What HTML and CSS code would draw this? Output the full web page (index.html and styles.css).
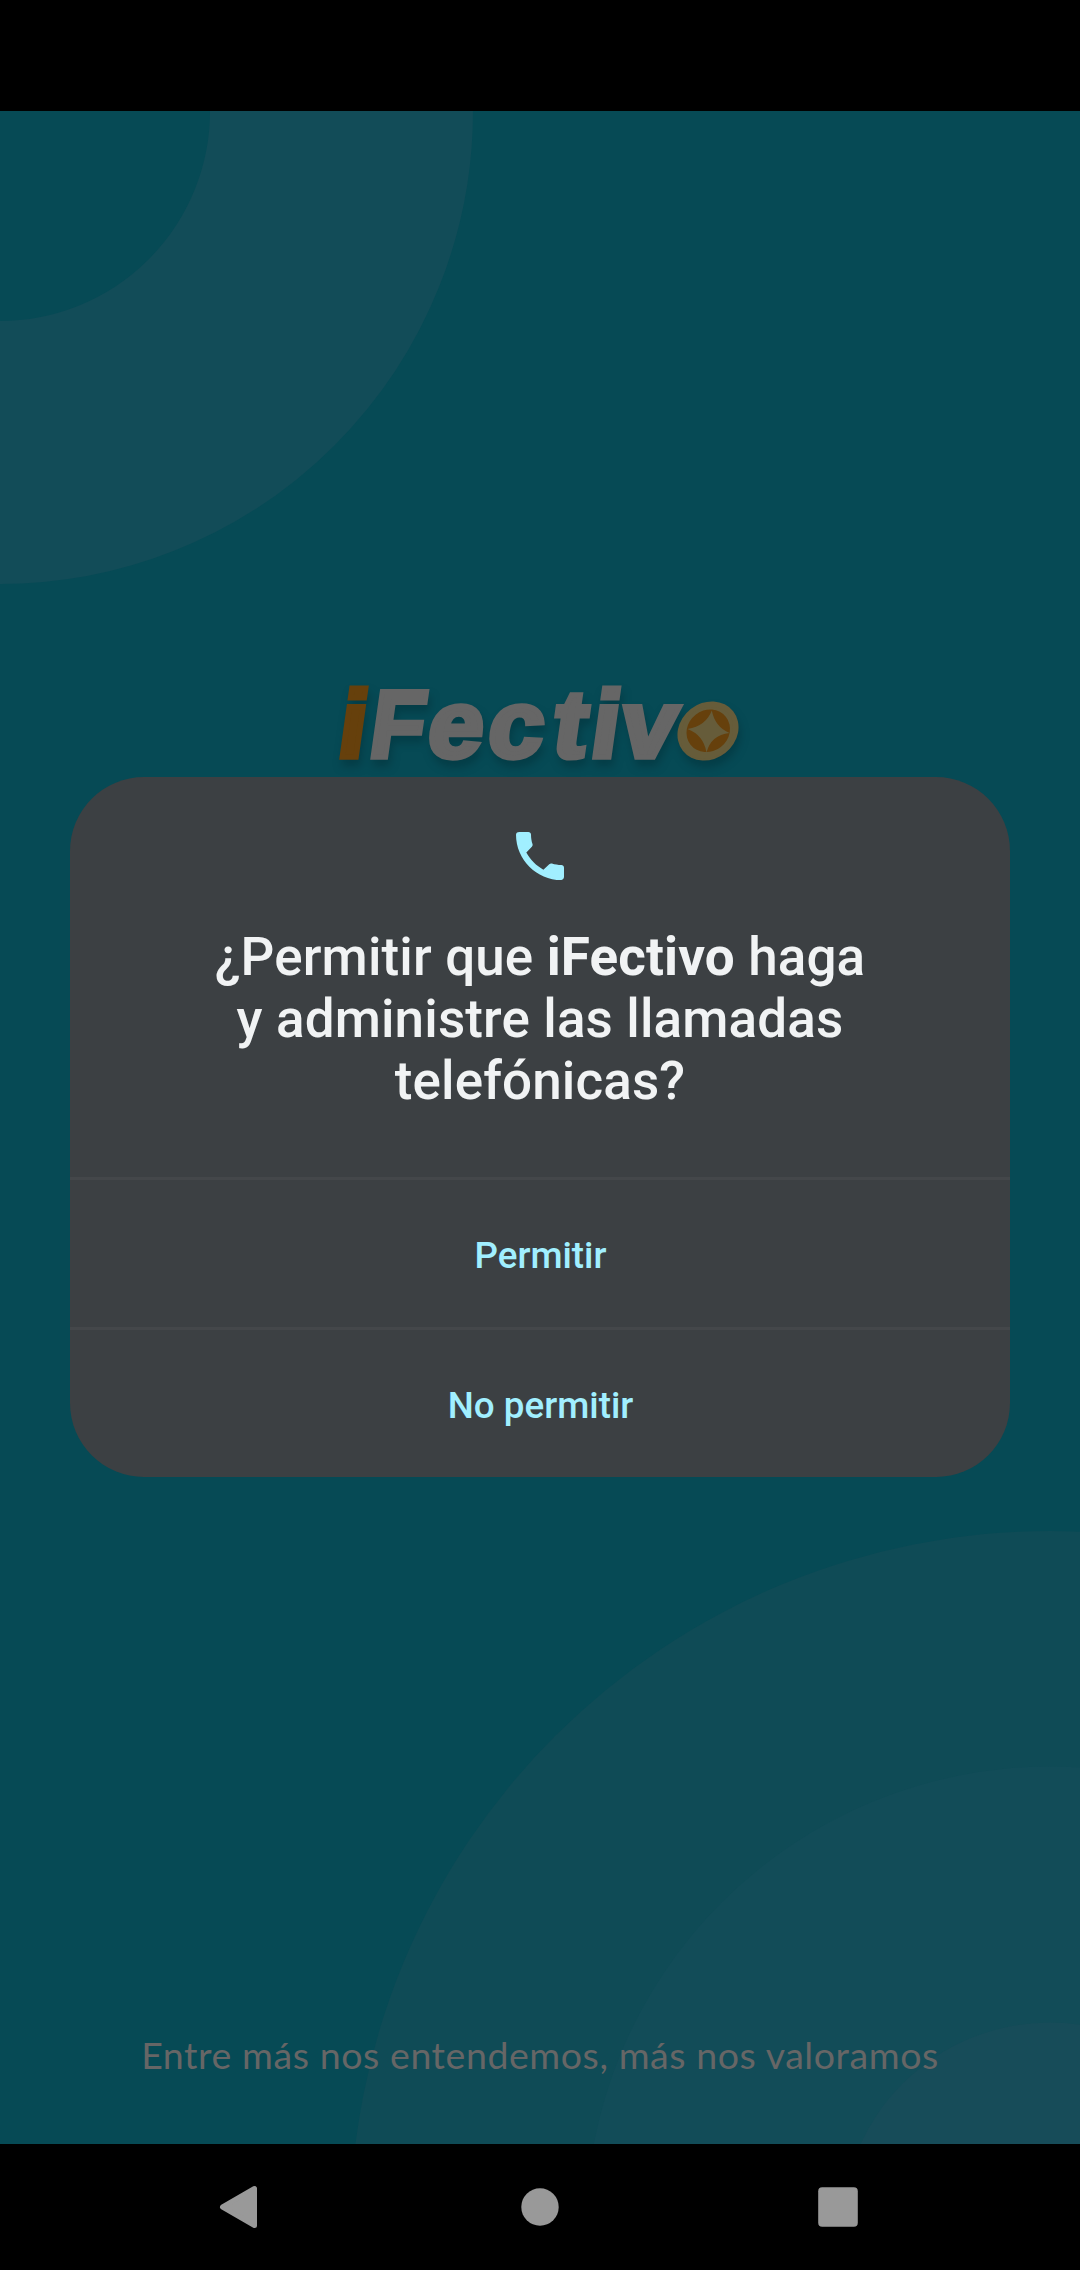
FILE: index.html
```html
<!DOCTYPE html>
<html lang="es">
<head>
<meta charset="utf-8">
<title>iFectivo</title>
<link rel="stylesheet" href="styles.css">
</head>
<body>
<div class="device">
  <div class="status-bar"></div>
  <main class="splash">
    <svg class="rings" viewBox="0 0 1080 2033" aria-hidden="true">
      <circle class="ring-top" cx="0" cy="0" r="341.500"/>
      <circle class="ring-low-outer" cx="1050" cy="2120" r="700"/>
      <circle class="ring-low-middle" cx="1050" cy="2120" r="464.500"/>
      <circle class="ring-low-inner" cx="1050" cy="2120" r="208.500"/>
    </svg>
    <svg class="logo" viewBox="0 0 440 120" role="img" aria-label="iFectivo">
      <g class="logo-word">
        <text class="logo-accent" transform="translate(0 86.500) skewX(-8) scale(1.04 1)" x="15" y="0">i</text>
        <text transform="translate(0 86.500) skewX(-8) scale(.92 1)" x="51.500" y="0">F</text>
        <text transform="translate(0 86.500) skewX(-8) scale(1.04 1)" x="101 159 221.500 258 286.500" y="0">ectiv</text>
        <ellipse class="coin-rim" cx="388" cy="61" rx="32" ry="28" transform="rotate(-38 388 61)"/>
        <text class="logo-coin-letter" x="358" y="88">o</text>
        <ellipse class="coin-face" cx="388.300" cy="61" rx="22.500" ry="20.500" transform="rotate(-38 388 61)"/>
        <path class="coin-star" d="M391.800 40.500Q395 57 409.500 63Q391 65 386.500 82.500Q383.500 65 367.500 59Q386 56 391.800 40.500Z"/>
      </g>
    </svg>
    <section class="dialog" role="dialog">
      <header class="dialog-head">
        <svg class="phone" viewBox="0 0 24 24" aria-hidden="true"><path d="M20.010 15.380c-1.230 0-2.420-.2-3.530-.56-.35-.12-.74-.03-1.010.24l-2.200 2.050c-2.600-1.350-5-3.800-6.400-6.400l2.080-2.170c.27-.28.35-.67.24-1.020-.37-1.110-.56-2.300-.56-3.530 0-.54-.45-.99-.99-.99H4.190C3.650 3 3 3.240 3 3.990 3 13.280 10.730 21 20.010 21c.71 0 .99-.63.99-1.180v-3.450c0-.54-.45-.99-.99-.99z"/></svg>
        <h1 class="title">¿Permitir que <b>iFectivo</b> haga<br>y administre las llamadas<br>telefónicas?</h1>
      </header>
      <button class="action">Permitir</button>
      <button class="action">No permitir</button>
    </section>
    <p class="tagline">Entre más nos entendemos, más nos valoramos</p>
  </main>
  <nav class="nav-bar">
    <svg class="nav-icon" viewBox="0 0 48 48"><path class="nav-back" d="M4.500 24L36.500 5.500V42.500Z"/></svg>
    <svg class="nav-icon" viewBox="0 0 48 48"><circle cx="24" cy="24" r="18.700"/></svg>
    <svg class="nav-icon" viewBox="0 0 48 48"><rect x="4.200" y="4.200" width="39.600" height="39.600" rx="4"/></svg>
  </nav>
</div>
</body>
</html>
```
FILE: styles.css
```css
* { box-sizing: border-box; }
body { margin: 0; background: #000; }
.device {
  width: 1080px;
  height: 2270px;
  display: flex;
  flex-direction: column;
  overflow: hidden;
  font-family: Roboto, "Liberation Sans", sans-serif;
}
.status-bar { height: 111px; background: #000; }
.splash {
  position: relative;
  height: 2033px;
  padding: 559px 70px 0;
  display: flex;
  flex-direction: column;
  align-items: center;
  background: #064a55;
  overflow: hidden;
}
/* decorative backdrop behind the content */
.rings { position: absolute; inset: 0; width: 1080px; height: 2033px; }
.ring-top { fill: none; stroke: #124c58; stroke-width: 263px; }
.ring-low-outer { fill: #0f4b56; }
.ring-low-middle { fill: #124c58; }
.ring-low-inner { fill: #174c59; }

.logo {
  position: relative;
  width: 440px;
  height: 120px;
  margin-bottom: -13px;
  flex: none;
  overflow: visible;
}
.logo-word {
  font: 700 95px "Liberation Sans", Arial, sans-serif;
  fill: #666;
  stroke: #666;
  stroke-width: 5.5px;
  filter: drop-shadow(2px 7px 4px rgba(0, 30, 38, .3));
}
.logo-accent { fill: #66400c; stroke: #66400c; }
.logo-coin-letter { font-style: italic; }
.logo-coin-letter, .coin-rim, .coin-star { fill: #665c3a; stroke: none; }
.coin-face { fill: #66400c; stroke: none; }

.dialog {
  position: relative;
  width: 940px;
  height: 700px;
  flex: none;
  border-radius: 74px;
  background: #3c4043;
  overflow: hidden;
}
.dialog-head {
  height: 400px;
  padding-top: 47px;
  display: flex;
  flex-direction: column;
  align-items: center;
}
.phone { width: 64px; height: 64px; fill: #a1efff; }
.title {
  margin: 38px 0 0;
  font-size: 53px;
  line-height: 62px;
  font-weight: 500;
  letter-spacing: .13px;
  text-align: center;
  color: #f1f3f4;
}
.title b { font-weight: 700; }
.action {
  display: block;
  width: 100%;
  height: 150px;
  padding: 3px 0 0 1px;
  border: 0;
  border-top: 3px solid #44474a;
  background: none;
  color: #a1efff;
  font: 500 36.8px Roboto, "Liberation Sans", sans-serif;
}
.tagline {
  position: relative;
  margin: 552px 0 0;
  font: 400 37.5px/52px Lato, "Noto Sans", sans-serif;
  letter-spacing: .57px;
  white-space: nowrap;
  color: #666;
}
.nav-bar {
  height: 126px;
  padding: 0 218px;
  display: flex;
  align-items: center;
  justify-content: space-between;
  background: #000;
}
.nav-icon { width: 48px; height: 48px; fill: #999; }
.nav-back { stroke: #999; stroke-width: 5px; stroke-linejoin: round; }
```
